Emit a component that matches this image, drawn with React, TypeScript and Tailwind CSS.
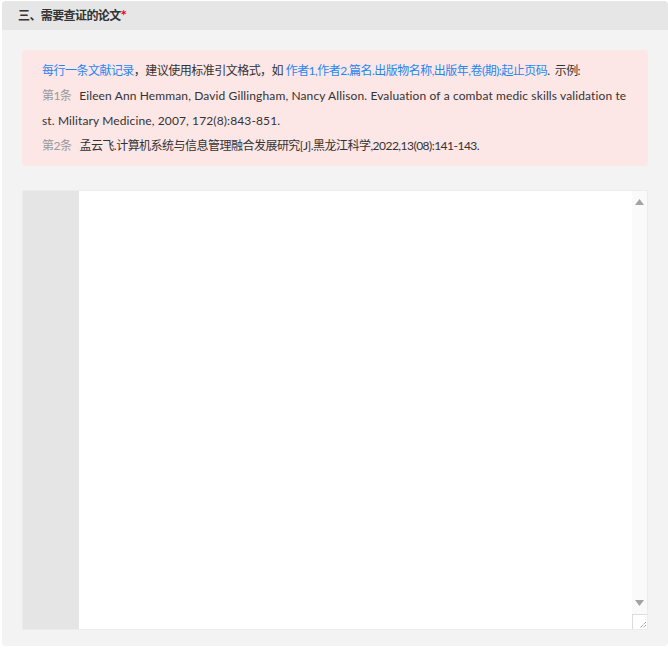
import { useState } from "react";

const font = { fontFamily: '"Lato", "Noto Sans CJK SC", sans-serif' };

export default function App() {
  const [text, setText] = useState("");

  return (
    <div className="bg-white pt-px pl-[2px]" style={font}>
      <div className="w-[666px] rounded-[4px] bg-[#f3f3f3] pb-4">
        <div className="flex h-[29px] items-center rounded-t-[4px] bg-[#e6e6e6] pl-4 text-[12px] font-bold text-[#333] tracking-[-0.6px]">
          三、需要查证的论文<span className="text-[15px] leading-none text-[#ff0000]">*</span>
        </div>

        <div className="px-5 pt-5">
          <div className="rounded-[4px] bg-[#fde6e6] px-5 py-2 text-[12px] leading-[25px] text-[#333] whitespace-nowrap">
            <div className="tracking-[-0.52px]">
              <span className="text-[#1e88f0]">每行一条文献记录</span>，建议使用标准引文格式，如{" "}
              <span className="text-[#1e88f0]">作者1,作者2.篇名.出版物名称,出版年,卷(期):起止页码</span>.&nbsp; 示例:
            </div>
            <div className="tracking-[0.12px]">
              <span className="mr-2 inline-block tracking-[-0.6px] text-[#999]">第1条</span>
              Eileen Ann Hemman, David Gillingham, Nancy Allison. Evaluation of a combat medic skills validation te
            </div>
            <div className="tracking-[0.12px]">st. Military Medicine, 2007, 172(8):843-851.</div>
            <div className="tracking-[-0.52px]">
              <span className="mr-2 inline-block text-[#999]">第2条</span>
              孟云飞.计算机系统与信息管理融合发展研究[J].黑龙江科学,2022,13(08):141-143.
            </div>
          </div>

          <div className="mt-6 flex h-[440px] border border-[#ececec] bg-white">
            <div className="w-[56px] shrink-0 bg-[#e5e5e5]" />
            <textarea
              value={text}
              onChange={(e) => setText(e.target.value)}
              className="h-full flex-1 resize-none overflow-hidden bg-white px-2 py-1 text-[12px] leading-[25px] text-[#333] outline-none"
            />
            <div className="flex w-[15px] shrink-0 flex-col bg-[#fafafa]">
              <div className="flex h-[22px] items-center justify-center">
                <svg width="9" height="6" viewBox="0 0 9 6">
                  <path d="M4.5 0 L9 6 L0 6 Z" fill="#a3a3a3" />
                </svg>
              </div>
              <div className="flex-1" />
              <div className="flex h-[22px] items-center justify-center">
                <svg width="9" height="6" viewBox="0 0 9 6">
                  <path d="M0 0 L9 0 L4.5 6 Z" fill="#a3a3a3" />
                </svg>
              </div>
              <div className="flex h-[15px] items-end justify-end border-t border-l border-[#dcdcdc] bg-white">
                <svg width="10" height="10" viewBox="0 0 10 10">
                  <path d="M9 3 L3 9 M9 6 L6 9" stroke="#555" strokeWidth="0.8" strokeDasharray="1 1" />
                </svg>
              </div>
            </div>
          </div>
        </div>
      </div>
    </div>
  );
}
